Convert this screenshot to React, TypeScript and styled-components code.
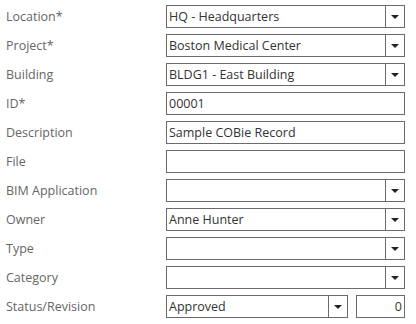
import * as React from 'react'
import styled, { createGlobalStyle } from 'styled-components'

const GlobalStyle = createGlobalStyle`
  body {
    margin: 0;
    background: #fff;
    font-family: "Open Sans", "Liberation Sans", sans-serif;
  }
`

const Form = styled.div`
  display: grid;
  grid-template-columns: 160px 1fr;
  row-gap: 6px;
  padding: 5px 11px 0 6px;
  width: 416px;
  box-sizing: border-box;
`

const Label = styled.div`
  font-size: 12.5px;
  color: #666;
  line-height: 23px;
`

const Box = styled.div`
  display: flex;
  height: 23px;
  box-sizing: border-box;
  border: 1px solid #6b6b6b;
  background: #fff;
`

const Value = styled.div<{ $align?: string }>`
  flex: 1;
  padding: 0 2px 0 2px;
  font-size: 12.5px;
  color: #333;
  line-height: 21px;
  text-align: ${p => p.$align || 'left'};
  white-space: nowrap;
  overflow: hidden;
`

const ArrowButton = styled.div`
  width: 18px;
  border-left: 1px solid #6b6b6b;
  display: flex;
  align-items: center;
  justify-content: center;
`

const Arrow = styled.div`
  width: 0;
  height: 0;
  border-left: 4px solid transparent;
  border-right: 4px solid transparent;
  border-top: 4px solid #222;
`

const Split = styled.div`
  display: flex;
  gap: 8px;
`

const Field: React.FC<{ value?: string; select?: boolean; align?: string; width?: number }> = ({
  value,
  select,
  align,
  width,
}) => (
  <Box style={width ? { width, flex: 'none' } : { flex: 1 }}>
    <Value $align={align}>{value}</Value>
    {select && (
      <ArrowButton>
        <Arrow />
      </ArrowButton>
    )}
  </Box>
)

const rows: { label: string; value?: string; select?: boolean }[] = [
  { label: 'Location*', value: 'HQ - Headquarters', select: true },
  { label: 'Project*', value: 'Boston Medical Center', select: true },
  { label: 'Building', value: 'BLDG1 - East Building', select: true },
  { label: 'ID*', value: '00001' },
  { label: 'Description', value: 'Sample COBie Record' },
  { label: 'File' },
  { label: 'BIM Application', select: true },
  { label: 'Owner', value: 'Anne Hunter', select: true },
  { label: 'Type', select: true },
  { label: 'Category', select: true },
]

export default function App() {
  return (
    <>
      <GlobalStyle />
      <Form>
        {rows.map(r => (
          <React.Fragment key={r.label}>
            <Label>{r.label}</Label>
            <Field value={r.value} select={r.select} />
          </React.Fragment>
        ))}
        <Label>Status/Revision</Label>
        <Split>
          <Field value="Approved" select width={182} />
          <Field value="0" align="right" />
        </Split>
      </Form>
    </>
  )
}
